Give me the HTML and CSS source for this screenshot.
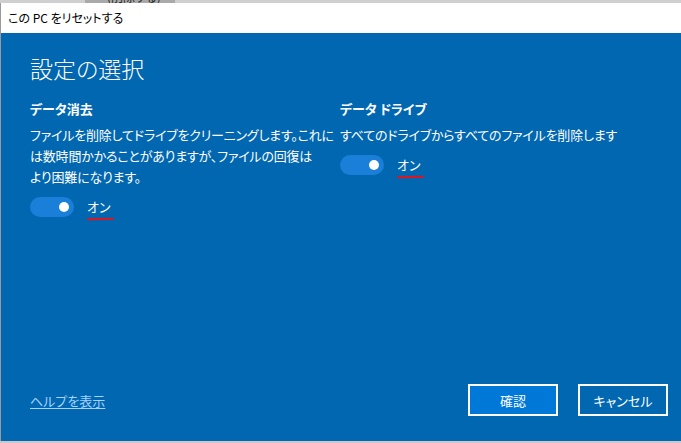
FILE: index.html
```html
<!DOCTYPE html>
<html lang="ja">
<head>
    <meta charset="UTF-8">
    <meta name="viewport" content="width=device-width, initial-scale=1.0">
    <title>この PC をリセットする</title>
    <link rel="stylesheet" href="styles.css">
</head>
<body>
    <div class="screen">
        <div class="taskstrip">
            <span class="tab"><span class="tab-text">(削除する)</span></span>
        </div>

        <div class="window">
            <div class="titlebar">この PC をリセットする</div>

            <div class="dialog">
                <h1>設定の選択</h1>

                <div class="options">
                    <div class="option">
                        <h2>データ消去</h2>
                        <p>ファイルを削除してドライブをクリーニングします。これに<br>は数時間かかることがありますが、ファイルの回復は<br>より困難になります。</p>
                        <div class="switch-row">
                            <span class="switch"><span class="knob"></span></span>
                            <span class="state">オン</span>
                        </div>
                    </div>
                    <div class="option">
                        <h2>データ ドライブ</h2>
                        <p>すべてのドライブからすべてのファイルを削除します</p>
                        <div class="switch-row">
                            <span class="switch"><span class="knob"></span></span>
                            <span class="state">オン</span>
                        </div>
                    </div>
                </div>

                <div class="footer">
                    <a href="#" class="help">ヘルプを表示</a>
                    <div class="buttons">
                        <button class="btn btn-primary">確認</button>
                        <button class="btn">キャンセル</button>
                    </div>
                </div>
            </div>
        </div>
        <div class="bottomstrip"></div>
    </div>
</body>
</html>
```

FILE: styles.css
```css
body { margin: 0; background: #fff; font-family: "Noto Sans CJK JP", "Noto Sans", sans-serif; font-feature-settings: "palt"; color: #000; }
.screen { width: 681px; height: 443px; overflow: hidden; }

.taskstrip { height: 3px; background: #cfcfcf; overflow: hidden; display: flex; }
.tab { margin-left: 85px; width: 90px; height: 3px; background: #a9a9a9; overflow: hidden; display: block; }
.tab-text { display: block; margin: -9px 0 0 22px; font-size: 12px; line-height: 12px; color: #222; }

.window { border-left: 1px solid #9a9a9a; }
.titlebar { height: 30px; line-height: 30px; padding-left: 7px; font-size: 12px; background: #fff; }

.dialog { height: 408px; box-sizing: border-box; background: #0067b0; color: #fff; padding: 19px 13px 25px 29px; display: flex; flex-direction: column; }
h1 { margin: 0; font-size: 23px; font-weight: 300; line-height: 32px; }

.options { display: flex; gap: 4px; margin-top: 15px; }
.option { width: 306px; }
h2 { margin: 0; font-size: 13px; font-weight: 700; line-height: 20px; }
.option p { margin: 5px 0 0; font-size: 13px; line-height: 21px; letter-spacing: -0.2px; white-space: nowrap; }

.switch-row { display: flex; align-items: center; margin-top: 9px; }
.switch { width: 44px; height: 20px; border-radius: 10px; background: #1a7fd8; display: flex; align-items: center; justify-content: flex-end; padding-right: 5px; box-sizing: border-box; }
.knob { width: 10px; height: 10px; border-radius: 50%; background: #fff; }
.state { position: relative; margin-left: 13px; font-size: 13px; line-height: 20px; padding-top: 1px; }
.state::after { content: ""; position: absolute; left: 0; right: -3px; bottom: -3px; height: 2px; border-radius: 2px; background: #e3131b; transform: rotate(-1deg); }

.footer { margin-top: auto; display: flex; align-items: center; justify-content: space-between; }
.help { color: #a6d2ff; font-size: 13px; text-decoration: underline; text-underline-offset: 2px; }
.buttons { display: flex; gap: 20px; }
.btn { width: 90px; height: 32px; border: 2px solid #fff; background: #0067b0; color: #fff; font-family: inherit; font-feature-settings: "palt"; font-size: 13px; cursor: pointer; }
.btn-primary { background: #0078d7; }

.bottomstrip { height: 2px; background: #c8c8c8; }
```
